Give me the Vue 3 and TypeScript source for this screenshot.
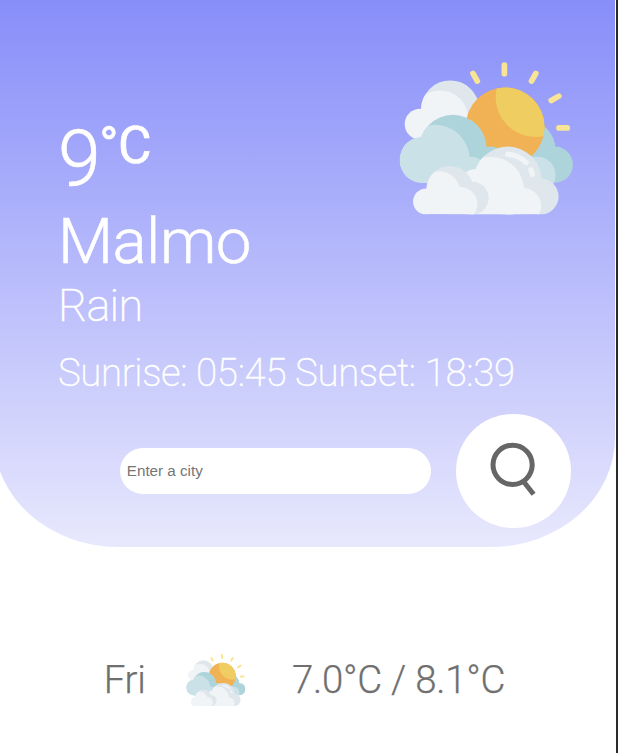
<script setup lang="ts">
import { ref } from 'vue'

interface ForecastDay {
  day: string
  low: string
  high: string
}

const query = ref('')
const weather = {
  temperature: 9,
  city: 'Malmo',
  description: 'Rain',
  sunrise: '05:45',
  sunset: '18:39',
}
const forecast: ForecastDay[] = [{ day: 'Fri', low: '7.0', high: '8.1' }]
</script>

<template>
  <div class="page">
    <svg class="sprite" width="0" height="0" aria-hidden="true">
      <defs>
        <clipPath id="clip-base"><rect x="27" y="37" width="520" height="456" /></clipPath>
        <clipPath id="clip-rear"><circle cx="180" cy="179" r="87" /></clipPath>
        <clipPath id="clip-sun"><circle cx="344" cy="231" r="118" /></clipPath>
        <clipPath id="clip-teal">
          <circle cx="188" cy="296" r="101" />
          <circle cx="97" cy="330" r="69" />
          <circle cx="300" cy="350" r="60" />
          <rect x="97" y="330" width="200" height="69" />
        </clipPath>
        <clipPath id="clip-front"><circle cx="352" cy="392" r="102" /><rect x="200" y="420" width="260" height="73" /></clipPath>
        <clipPath id="clip-small"><circle cx="179" cy="418" r="70" /><rect x="100" y="430" width="165" height="63" /></clipPath>
        <symbol id="partly-cloudy" viewBox="27 37 520 456">
          <g clip-path="url(#clip-base)">
            <circle cx="180" cy="179" r="87" fill="#dfe7ec" />
            <circle cx="90" cy="223" r="46" fill="#f0f4f7" />
            <circle cx="149" cy="207" r="85" fill="#f0f4f7" clip-path="url(#clip-rear)" />
            <circle cx="404" cy="300" r="91" fill="#aed4db" />
            <circle cx="493" cy="344" r="54" fill="#aed4db" />
            <circle cx="440" cy="375" r="55" fill="#c9e1e7" />
            <circle cx="344" cy="231" r="118" fill="#f1b255" />
            <circle cx="434" cy="143" r="118" fill="#f0cd60" clip-path="url(#clip-sun)" />
            <circle cx="188" cy="296" r="101" fill="#aed4db" />
            <circle cx="300" cy="350" r="60" fill="#aed4db" />
            <g fill="#c9e1e7" clip-path="url(#clip-teal)">
              <circle cx="97" cy="330" r="69" />
              <circle cx="135" cy="328" r="103" />
              <circle cx="240" cy="375" r="55" />
              <rect x="97" y="340" width="143" height="59" />
            </g>
            <circle cx="352" cy="392" r="102" fill="#dfe7ec" />
            <circle cx="450" cy="439" r="54" fill="#dfe7ec" />
            <circle cx="262" cy="421" r="65" fill="#f0f4f7" />
            <g fill="#f0f4f7" clip-path="url(#clip-front)">
              <circle cx="300" cy="421" r="101" />
              <circle cx="398" cy="468" r="54" />
              <rect x="220" y="440" width="190" height="53" />
            </g>
            <circle cx="179" cy="418" r="70" fill="#dfe7ec" />
            <circle cx="246" cy="444" r="49" fill="#dfe7ec" />
            <circle cx="108" cy="454" r="39" fill="#f0f4f7" />
            <g fill="#f0f4f7" clip-path="url(#clip-small)">
              <circle cx="147" cy="427" r="63" />
              <circle cx="210" cy="462" r="51" />
              <rect x="108" y="440" width="110" height="53" />
            </g>
            <g fill="none" stroke="#f0f4f7" stroke-width="16" stroke-linecap="round">
              <path d="M352 313Q384 314 407 338" />
              <path d="M421 359L426 373" />
            </g>
            <g fill="none" stroke="#f8e495" stroke-width="17" stroke-linecap="round">
              <path d="M342 46V72M248 71L261 94M436 71L423 94M505 139L482 152M505 234H530" />
            </g>
          </g>
        </symbol>
      </defs>
    </svg>

    <main class="app">
      <section class="hero">
        <div class="summary">
          <div>
            <h1 class="temperature">{{ weather.temperature }}<span class="unit">°C</span></h1>
            <h2 class="city">{{ weather.city }}</h2>
          </div>
          <svg class="hero-icon"><use href="#partly-cloudy" /></svg>
        </div>
        <p class="description">{{ weather.description }}</p>
        <p class="sun-times">Sunrise: {{ weather.sunrise }} Sunset: {{ weather.sunset }}</p>
        <form class="search" @submit.prevent>
          <input v-model="query" class="search-input" type="text" placeholder="Enter a city" />
          <button class="search-button" type="submit" aria-label="Search">
            <svg class="search-icon" viewBox="0 0 46 54" fill="none" stroke="#666" stroke-width="5">
              <circle cx="22.6" cy="22.8" r="19.6" />
              <path d="M33.5 39.5L43.6 52.2" />
            </svg>
          </button>
        </form>
      </section>

      <section class="forecast">
        <div v-for="item in forecast" :key="item.day" class="forecast-row">
          <span class="day">{{ item.day }}</span>
          <svg class="day-icon"><use href="#partly-cloudy" /></svg>
          <span class="range">{{ item.low }}°C / {{ item.high }}°C</span>
        </div>
      </section>
    </main>
  </div>
</template>

<style>
body {
  background: #fff;
  overflow: hidden;
}
</style>

<style scoped>
.page {
  box-sizing: border-box;
  height: 753px;
  border-right: 2px solid #2b2c28;
  overflow: hidden;
  font-family: Roboto, sans-serif;
}
.sprite {
  display: block;
}
.app {
  width: 621px;
  margin-left: -6px;
}
.hero {
  box-sizing: border-box;
  height: 546.6px;
  padding: 62.3px 44.4px 0 64px;
  border-radius: 0 0 20% 20%;
  background: linear-gradient(#878ef9, #e8e8fd);
  color: #fff;
}
.summary {
  display: flex;
  justify-content: space-between;
  height: 216.7px;
}
.temperature,
.city,
.description,
.sun-times {
  margin: 0;
  white-space: nowrap;
}
.temperature {
  display: flex;
  margin-top: 53px;
  font-size: 77px;
  font-weight: 300;
  line-height: 90px;
  letter-spacing: -1.5px;
  -webkit-text-stroke: 0.6px #fff;
}
.unit {
  font-size: 51.5px;
  font-weight: 400;
  line-height: 61.5px;
  letter-spacing: -0.5px;
}
.city {
  font-size: 63.6px;
  font-weight: 300;
  line-height: 74px;
  letter-spacing: -0.5px;
  -webkit-text-stroke: 0.6px #fff;
}
.hero-icon {
  width: 174px;
  height: 152.5px;
  margin-right: -2px;
}
.description {
  font-size: 45px;
  font-weight: 200;
  line-height: 53px;
  letter-spacing: -0.7px;
  -webkit-text-stroke: 0.4px #fff;
}
.sun-times {
  margin-top: 15px;
  font-size: 38.4px;
  font-weight: 200;
  line-height: 52px;
  letter-spacing: -0.35px;
  -webkit-text-stroke: 0.35px #fff;
}
.search {
  display: flex;
  align-items: center;
  justify-content: flex-end;
  gap: 25.5px;
  margin-top: 14.7px;
}
.search-input {
  box-sizing: border-box;
  width: 310.5px;
  height: 45.6px;
  padding: 0 6.5px;
  border: 0;
  border-radius: 23px;
  background: #fff;
  font: 15.2px "Liberation Sans", sans-serif;
  outline: none;
}
.search-input::placeholder {
  color: #757575;
}
.search-button {
  display: flex;
  align-items: center;
  justify-content: center;
  width: 114.3px;
  height: 114.3px;
  padding: 0 0.4px 3px 0;
  border: 0;
  border-radius: 50%;
  background: #fff;
}
.search-icon {
  width: 46px;
  height: 54px;
}
.forecast {
  padding: 107.2px 0 0 109.7px;
  color: #6f6f6f;
}
.forecast-row {
  display: grid;
  grid-template-columns: 82px 106.3px auto;
  align-items: center;
  font-size: 38.4px;
  font-weight: 300;
  line-height: 51px;
  letter-spacing: -0.25px;
  -webkit-text-stroke: 0.25px #6f6f6f;
}
.day-icon {
  width: 59.5px;
  height: 52.2px;
}
</style>
